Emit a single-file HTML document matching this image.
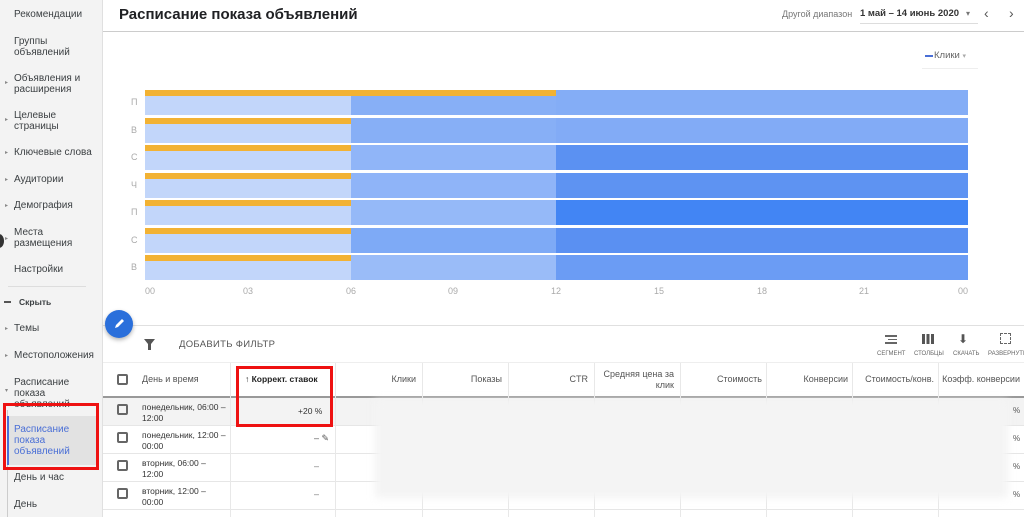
<!DOCTYPE html><html><head><meta charset="utf-8"><style>
*{margin:0;padding:0;box-sizing:border-box}
body{width:1024px;height:517px;overflow:hidden;background:#fff;font-family:"Liberation Sans",sans-serif;position:relative;color:#3c4043}
.a{position:absolute}
.sb{left:0;top:0;width:103px;height:517px;background:#f3f3f3;border-right:1px solid #e0e0e0}
.it{position:absolute;left:14px;font-size:10px;line-height:11px;color:#3c4043}
.ar{position:absolute;left:5px;font-size:6px;color:#888}
.row{position:absolute;left:145px;width:823px;height:25px}
.row div{position:absolute;top:0;height:25px}
.or{position:absolute;left:145px;height:6px;background:#f2b233}
.yl{position:absolute;left:131px;font-size:9px;color:#aaa}
.xl{position:absolute;top:286px;font-size:9px;color:#aaa}
.th{position:absolute;top:374px;font-size:9px;color:#555;text-align:right}
.vl{position:absolute;top:363px;height:154px;width:1px;background:#e8e8e8}
.hl{position:absolute;left:103px;width:921px;height:1px;background:#e6e6e6}
.cb{position:absolute;left:117px;width:11px;height:11px;border:2px solid #666;border-radius:2px}
.dt{position:absolute;left:142px;font-size:8.5px;line-height:11px;color:#333}
</style></head><body>
<div class="a sb"></div>
<div class="it" style="top:9px">Рекомендации</div>
<div class="it" style="top:36px">Группы<br>объявлений</div>
<div class="ar" style="top:79px">▸</div><div class="it" style="top:73px">Объявления и<br>расширения</div>
<div class="ar" style="top:116px">▸</div><div class="it" style="top:110px">Целевые<br>страницы</div>
<div class="ar" style="top:149px">▸</div><div class="it" style="top:147px">Ключевые слова</div>
<div class="ar" style="top:176px">▸</div><div class="it" style="top:174px">Аудитории</div>
<div class="ar" style="top:202px">▸</div><div class="it" style="top:200px">Демография</div>
<div class="ar" style="top:235px">▸</div><div class="it" style="top:227px">Места<br>размещения</div>
<div class="a" style="left:-6px;top:234px;width:10px;height:14px;border-radius:50%;background:#333"></div>
<div class="it" style="top:264px">Настройки</div>
<div class="a" style="left:8px;top:286px;width:78px;height:1px;background:#ddd"></div>
<div class="a" style="left:4px;top:301px;width:7px;height:2px;background:#555"></div>
<div class="it" style="top:297px;left:19px;font-size:8.5px;font-weight:bold">Скрыть</div>
<div class="ar" style="top:325px">▸</div><div class="it" style="top:323px">Темы</div>
<div class="ar" style="top:352px">▸</div><div class="it" style="top:350px">Местоположения</div>
<div class="ar" style="top:387px">▾</div><div class="it" style="top:377px">Расписание<br>показа<br>объявлений</div>
<div class="a" style="left:7px;top:410px;width:1px;height:107px;background:#ccc"></div>
<div class="a" style="left:7px;top:416px;width:91px;height:49px;background:#e2e2e2"></div>
<div class="a" style="left:7px;top:416px;width:2px;height:49px;background:#4a6fd6"></div>
<div class="it" style="top:424px;color:#4a6fd6">Расписание<br>показа<br>объявлений</div>
<div class="it" style="top:472px">День и час</div>
<div class="it" style="top:499px">День</div>
<div class="a" style="left:3px;top:403px;width:96px;height:67px;border:3px solid #e11"></div>

<div class="a" style="left:119px;top:6px;font-size:15px;font-weight:bold;color:#202124">Расписание показа объявлений</div>
<div class="a" style="left:103px;top:31px;width:921px;height:1px;background:#ccc"></div>
<div class="a" style="left:782px;top:9px;font-size:9px;color:#777">Другой диапазон</div>
<div class="a" style="left:860px;top:8px;font-size:9.5px;font-weight:bold;color:#333">1 май – 14 июнь 2020</div>
<div class="a" style="left:860px;top:23px;width:118px;height:1px;background:#ddd"></div>
<div class="a" style="left:966px;top:9px;font-size:8px;color:#777">▾</div>
<div class="a" style="left:984px;top:5px;font-size:14px;color:#555">‹</div>
<div class="a" style="left:1009px;top:5px;font-size:14px;color:#555">›</div>
<div class="a" style="left:925px;top:55px;width:8px;height:2px;background:#4a6fd6"></div>
<div class="a" style="left:934px;top:50px;font-size:9.5px;color:#666">Клики <span style="font-size:7px;color:#aaa">▾</span></div>
<div class="a" style="left:922px;top:68px;width:56px;height:1px;background:#eee"></div>

<div class="row" style="top:90px"><div style="left:0;width:206px;background:#c2d6fa"></div><div style="left:206px;width:205px;background:#87aff6"></div><div style="left:411px;width:412px;background:#84adf6"></div></div>
<div class="row" style="top:118px"><div style="left:0;width:206px;background:#c2d6fa"></div><div style="left:206px;width:205px;background:#87aff6"></div><div style="left:411px;width:412px;background:#82abf6"></div></div>
<div class="row" style="top:145px"><div style="left:0;width:206px;background:#c2d6fa"></div><div style="left:206px;width:205px;background:#90b5f8"></div><div style="left:411px;width:412px;background:#5b91f2"></div></div>
<div class="row" style="top:173px"><div style="left:0;width:206px;background:#c2d6fa"></div><div style="left:206px;width:205px;background:#8fb4f8"></div><div style="left:411px;width:412px;background:#5e93f2"></div></div>
<div class="row" style="top:200px"><div style="left:0;width:206px;background:#c2d6fa"></div><div style="left:206px;width:205px;background:#95b9f8"></div><div style="left:411px;width:412px;background:#4285f4"></div></div>
<div class="row" style="top:228px"><div style="left:0;width:206px;background:#c2d6fa"></div><div style="left:206px;width:205px;background:#7eaaf6"></div><div style="left:411px;width:412px;background:#5a90f2"></div></div>
<div class="row" style="top:255px"><div style="left:0;width:206px;background:#c2d6fa"></div><div style="left:206px;width:205px;background:#9abcf8"></div><div style="left:411px;width:412px;background:#6b9cf4"></div></div>
<div class="or" style="top:90px;width:411px"></div>
<div class="or" style="top:118px;width:206px"></div><div class="or" style="top:145px;width:206px"></div><div class="or" style="top:173px;width:206px"></div><div class="or" style="top:200px;width:206px"></div><div class="or" style="top:228px;width:206px"></div><div class="or" style="top:255px;width:206px"></div>
<div class="yl" style="top:97px">П</div><div class="yl" style="top:125px">В</div><div class="yl" style="top:152px">С</div><div class="yl" style="top:180px">Ч</div><div class="yl" style="top:207px">П</div><div class="yl" style="top:235px">С</div><div class="yl" style="top:262px">В</div>
<div class="xl" style="left:145px">00</div><div class="xl" style="left:243px">03</div><div class="xl" style="left:346px">06</div><div class="xl" style="left:448px">09</div><div class="xl" style="left:551px">12</div><div class="xl" style="left:654px">15</div><div class="xl" style="left:757px">18</div><div class="xl" style="left:859px">21</div><div class="xl" style="left:958px">00</div>

<div class="hl" style="top:325px;background:#e0e0e0"></div>
<div class="a" style="left:105px;top:310px;width:28px;height:28px;border-radius:50%;background:#2a6fdb;box-shadow:0 2px 4px rgba(0,0,0,.3)"></div>
<svg class="a" style="left:112px;top:317px" width="14" height="14" viewBox="0 0 14 14"><path d="M3 11l1-3 6-6 2 2-6 6z" fill="#fff"/></svg>
<svg class="a" style="left:143px;top:338px" width="13" height="13" viewBox="0 0 13 13"><path d="M1 1h11L8 6v6H5V6z" fill="#555"/></svg>
<div class="a" style="left:179px;top:339px;font-size:9.5px;color:#555;letter-spacing:.3px">ДОБАВИТЬ ФИЛЬТР</div>
<div class="a" style="left:885px;top:335px;width:12px;height:9px;border-top:2px solid #666;border-bottom:2px solid #666"></div>
<div class="a" style="left:888px;top:339px;width:9px;height:1px;background:#666"></div>
<div class="a" style="left:922px;top:334px;width:12px;height:10px;background:repeating-linear-gradient(90deg,#555 0 3px,#fff 3px 4.5px)"></div>
<div class="a" style="left:958px;top:332px;font-size:12px;color:#555">⬇</div>
<div class="a" style="left:1000px;top:333px;width:11px;height:11px;border:1.5px dashed #666"></div>
<div class="a" style="left:877px;top:351px;font-size:6px;color:#666">СЕГМЕНТ</div>
<div class="a" style="left:914px;top:351px;font-size:6px;color:#666">СТОЛБЦЫ</div>
<div class="a" style="left:953px;top:351px;font-size:6px;color:#666">СКАЧАТЬ</div>
<div class="a" style="left:988px;top:351px;font-size:6px;color:#666">РАЗВЕРНУТЬ</div>

<div class="hl" style="top:362px;background:#eee"></div>
<div class="hl" style="top:396px;height:2px;background:#999"></div>
<div class="a" style="left:103px;top:398px;width:921px;height:27px;background:#f3f3f3"></div>
<div class="hl" style="top:425px"></div><div class="hl" style="top:453px"></div><div class="hl" style="top:481px"></div><div class="hl" style="top:509px"></div>
<div class="vl" style="left:230px"></div><div class="vl" style="left:335px"></div><div class="vl" style="left:422px"></div><div class="vl" style="left:508px"></div><div class="vl" style="left:594px"></div><div class="vl" style="left:680px"></div><div class="vl" style="left:766px"></div><div class="vl" style="left:852px"></div><div class="vl" style="left:938px"></div>
<div class="cb" style="top:374px"></div><div class="cb" style="top:404px"></div><div class="cb" style="top:432px"></div><div class="cb" style="top:460px"></div><div class="cb" style="top:488px"></div>
<div class="th" style="left:142px;text-align:left">День и время</div>
<div class="th" style="left:245px;color:#222;font-weight:bold;font-size:8.5px">↑ Коррект. ставок</div>
<div class="th" style="left:340px;width:76px">Клики</div>
<div class="th" style="left:426px;width:76px">Показы</div>
<div class="th" style="left:512px;width:76px">CTR</div>
<div class="th" style="left:598px;width:76px;top:369px;line-height:11px">Средняя цена за<br>клик</div>
<div class="th" style="left:684px;width:78px">Стоимость</div>
<div class="th" style="left:770px;width:78px">Конверсии</div>
<div class="th" style="left:856px;width:78px">Стоимость/конв.</div>
<div class="th" style="left:942px;width:78px">Коэфф. конверсии</div>
<div class="dt" style="top:402px">понедельник, 06:00 –<br>12:00</div>
<div class="dt" style="top:430px">понедельник, 12:00 –<br>00:00</div>
<div class="dt" style="top:458px">вторник, 06:00 –<br>12:00</div>
<div class="dt" style="top:486px">вторник, 12:00 –<br>00:00</div>
<div class="a" style="left:298px;top:406px;font-size:8.5px;color:#333">+20 %</div>
<div class="a" style="left:314px;top:433px;font-size:9px;color:#555">– ✎</div>
<div class="a" style="left:314px;top:461px;font-size:9px;color:#777">–</div>
<div class="a" style="left:314px;top:489px;font-size:9px;color:#777">–</div>
<div class="a" style="left:375px;top:400px;width:633px;height:98px;background:#f4f4f4;filter:blur(4px)"></div>
<div class="a" style="left:1013px;top:406px;font-size:8px;color:#555">%</div>
<div class="a" style="left:1013px;top:434px;font-size:8px;color:#555">%</div>
<div class="a" style="left:1013px;top:462px;font-size:8px;color:#555">%</div>
<div class="a" style="left:1013px;top:490px;font-size:8px;color:#555">%</div>
<div class="a" style="left:236px;top:366px;width:97px;height:61px;border:3px solid #e11"></div>
</body></html>
